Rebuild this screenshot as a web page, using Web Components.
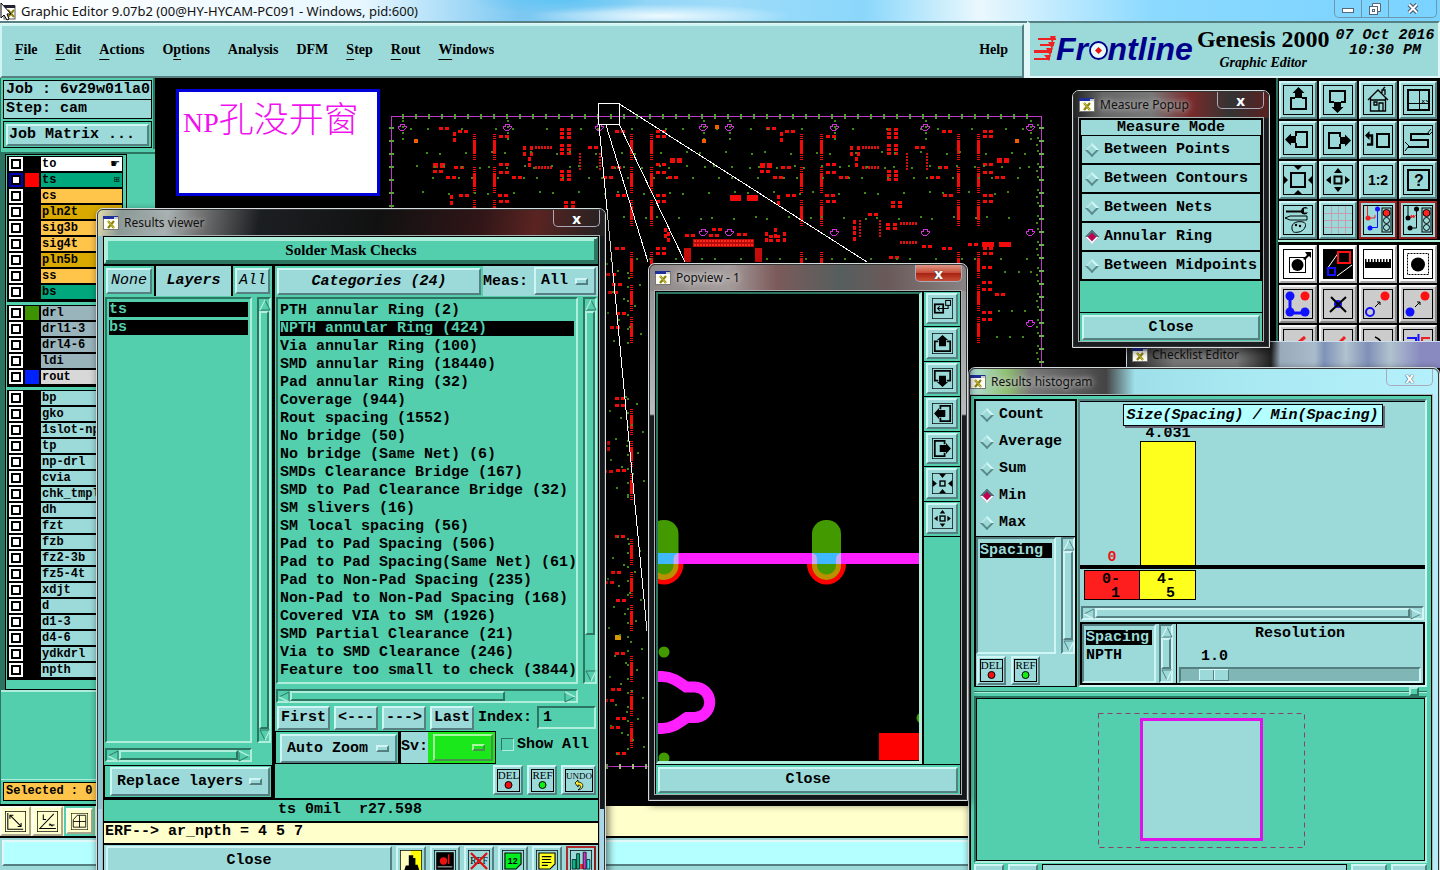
<!DOCTYPE html>
<html lang="en">
<head>
<meta charset="utf-8">
<title>Graphic Editor</title>
<style>
html,body{margin:0;height:100%;background:#000;overflow:hidden}
</style>
</head>
<body>
<ge-desktop></ge-desktop>
<script>
const MONO='"Liberation Mono","Noto Sans CJK SC",monospace';
const BASE=`
*{box-sizing:border-box}
:host{display:block;box-sizing:border-box}
:host,.cy{--face:#9cdada;--lt:#cff6f4;--dk:#557f80;--trough:#80b6b6}
.gr{--face:#54cfae;--lt:#aeeedb;--dk:#2c7561;--trough:#45ad91}
button,input,select{font:inherit;color:inherit;margin:0;padding:0;border:0;background:none;border-radius:0;outline:0;line-height:inherit}
button{text-align:center;white-space:nowrap}
.up{border:2px solid;border-color:var(--lt) var(--dk) var(--dk) var(--lt);background:var(--face)}
.in{border:2px solid;border-color:var(--dk) var(--lt) var(--lt) var(--dk);background:var(--face)}
svg{display:block}
ul{list-style:none;margin:0;padding:0}
`;
function define(name,css,html,setup){
  customElements.define(name,class extends HTMLElement{
    constructor(){super();this.attachShadow({mode:'open'});}
    connectedCallback(){
      const t=document.createElement('template');
      t.innerHTML='<style>'+BASE+css+'</style>'+(typeof html==='function'?html(this):html);
      this.shadowRoot.replaceChildren(t.content.cloneNode(true));
      if(setup)setup(this,this.shadowRoot);
    }
  });
}

/* ---------- icons ---------- */
const FRAME='<rect x=".5" y=".5" width="29" height="29" fill="none" stroke="#000"/>';
const ARROWBOX='<path d="M12 13H8V24H23V13H19" fill="none" stroke="#000" stroke-width="2"/><path d="M15.500 2l6 6h-2.500v5h-7V8H9.500z"/>';
const TRI4=(a,b)=>[0,90,180,270].map(r=>`<path transform="rotate(${r} 15 15)" d="M${11} ${a}h8l-4 ${b}z"/>`).join('');
const LIGHT='<rect x="19" y="3" width="9" height="24" fill="none" stroke="#000"/><circle cx="23.500" cy="8" r="3.500" fill="#f22" stroke="#000"/><circle cx="23.500" cy="15.500" r="3" fill="none" stroke="#000"/><circle cx="23.500" cy="22.500" r="3" fill="none" stroke="#000"/>';
const BOLDBOX='<path d="M9 12H4V26H26V12H21" fill="none" stroke="#000" stroke-width="2.500"/><path d="M15 3l8 7h-3v9H10v-9H7z"/>';
const ICONS={
 up:ARROWBOX,
 down:`<g transform="rotate(180 15 15)">${ARROWBOX}</g>`,
 left:`<g transform="rotate(-90 15 15)">${ARROWBOX}</g>`,
 right:`<g transform="rotate(90 15 15)">${ARROWBOX}</g>`,
 bup:BOLDBOX,
 bdown:`<g transform="rotate(180 15 15)">${BOLDBOX}</g>`,
 bleft:`<g transform="rotate(-90 15 15)">${BOLDBOX}</g>`,
 bright:`<g transform="rotate(90 15 15)">${BOLDBOX}</g>`,
 home:'<path d="M5 15L15 5l10 10M7.500 13v13h15V13M7 15h16M19 8V5h3v5M20 4l2-2M11 17h3v3h-3zM16 26v-8h4v8" fill="none" stroke="#000" stroke-width="1.300"/>',
 xy:'<rect x="5" y="5" width="21" height="20" fill="none" stroke="#000" stroke-width="2"/><path d="M16.500 5v20M5 18.500h21" stroke="#000"/><path d="M19 15l2.500 3M21.500 15l-2.500 3M23 15l1.500 2 1-2" fill="none" stroke="#000" stroke-width=".8"/>',
 undo:'<rect x="14" y="9" width="12" height="13" fill="none" stroke="#000" stroke-width="2"/><path d="M5 10.500h4v9H4" fill="none" stroke="#000" stroke-width="2.500"/><path d="M2 10.500L6.500 6v9z"/>',
 snake:'<path d="M26 9H8V15H25V22H5" fill="none" stroke="#000" stroke-width="2"/><path d="M24 9l4-5M26 10l3-3M6 21l-4-4M5 22l-3 4" fill="none" stroke="#000"/>',
 fit:'<rect x="8" y="8" width="14" height="14" fill="none" stroke="#000" stroke-width="2"/>'+TRI4(1,4),
 zin:'<rect x="11.500" y="11.500" width="7" height="7" fill="none" stroke="#000" stroke-width="2"/>'+[0,90,180,270].map(r=>`<path transform="rotate(${r} 15 15)" d="M11 8h8l-4-5z"/>`).join(''),
 zout:'<rect x="11.500" y="11.500" width="7" height="7" fill="none" stroke="#000" stroke-width="2"/>'+[0,90,180,270].map(r=>`<path transform="rotate(${r} 15 15)" d="M10 1h10l-5 6z"/>`).join(''),
 half:'<text x="15" y="20" text-anchor="middle" font-family="Liberation Sans,sans-serif" font-weight="700" font-size="14">1:2</text>',
 help:'<rect x="5" y="5" width="21" height="20" fill="none" stroke="#000" stroke-width="2"/><text x="16" y="21" text-anchor="middle" font-family="Liberation Sans,sans-serif" font-weight="700" font-size="16">?</text>',
 tools:'<path d="M3 5.500h15a4 4 0 0 1 7-2h-4v4h4a4 4 0 0 1-7 0H3z"/><path d="M2 13l5-2h17v4H7z" fill="none" stroke="#000"/><path d="M9 24c-1-7 6-8 11-7s2 9-4 10-6 0-7-3z" fill="none" stroke="#000"/><circle cx="13" cy="20" r="1.200"/><circle cx="17" cy="21" r="1.200"/>',
 grid:'<path d="M8.500 1v28M15.500 1v28M22.500 1v28M1 8.500h28M1 15.500h28M1 22.500h28" stroke="#c99cb0"/>',
 tl1:'<path d="M4.500 1v12H12v-3" fill="none" stroke="#e22"/><circle cx="5" cy="13" r="2.500" fill="#e22"/><path d="M14.500 4v18.500H7" fill="none" stroke="#11f"/><circle cx="14.500" cy="4" r="2.500" fill="#11f"/><circle cx="7" cy="23" r="2.500" fill="#11f"/>'+LIGHT,
 tl2:'<path d="M5 1v11M13.500 4v19H7" fill="none" stroke="#000"/><path d="M7 13l1.500-3v3l2-3v3l2-3" fill="none" stroke="#e22"/><circle cx="5" cy="13" r="2.500"/><circle cx="13.500" cy="4" r="2.500"/><circle cx="7" cy="23" r="2.500"/>'+LIGHT,
 dot:'<rect x="6.500" y="8.500" width="16" height="15" fill="none" stroke="#000"/><circle cx="14.500" cy="16" r="6"/><path d="M20 10l4-4-2-3h6v6l-2-2-4 4z"/>',
 poly:'<rect x="0" y="0" width="30" height="30" fill="#000"/><path d="M4 20L16 3M14 27l15-11" stroke="#fff"/><rect x="15" y="3" width="12" height="11" fill="none" stroke="#f11" stroke-width="2"/><rect x="5" y="19" width="7" height="7" fill="none" stroke="#11f" stroke-width="2"/>',
 ruler:'<path d="M2 10h1.500v3H5v-3h1.500v3H8v-3h1.500v3H11v-3h1.500v3H14v-3h1.500v3H17v-3h1.500v3H20v-3h1.500v3H23v-3h1.500v3H26v-3h2v9H2z"/>',
 pad:'<rect x="4.500" y="4.500" width="21" height="21" fill="none" stroke="#000" stroke-dasharray="2 1"/><circle cx="15" cy="15.500" r="7"/>',
 net:'<path d="M7 7v17h16" fill="none" stroke="#11f" stroke-width="3"/><circle cx="7" cy="7" r="4.500" fill="#11f"/><circle cx="7" cy="23" r="4.500" fill="#11f"/><circle cx="22" cy="23" r="4.500" fill="#11f"/><circle cx="22" cy="7" r="4.500" fill="#f11"/>',
 del:'<circle cx="15" cy="15" r="4" fill="#11f"/><path d="M8 8l15 15M23 8L7 23" stroke="#000" stroke-width="2"/>',
 mv1:'<circle cx="7" cy="23" r="4" fill="none" stroke="#11f" stroke-width="2"/><circle cx="22" cy="7" r="4.500" fill="#f11"/><path d="M12 18l5-5m-3 0h3v3" fill="none" stroke="#000"/>',
 mv2:'<circle cx="7" cy="23" r="4.500" fill="#11f"/><circle cx="22" cy="7" r="4.500" fill="#f11"/><path d="M12 18l5-5m-3 0h3v3" fill="none" stroke="#000"/>',
 ln1:'<path d="M8 20L22 8" stroke="#e22" stroke-width="3"/><path d="M6 24h17" stroke="#44d" stroke-width="3"/>',
 ln2:'<path d="M8 22L22 8" stroke="#e22" stroke-width="3"/><path d="M6 26L18 14" stroke="#44d" stroke-width="3"/>',
 arc:'<path d="M12 8q10 4 4 14" fill="none" stroke="#000" stroke-width="1.500"/>',
 mir:'<path d="M4 9h9v8H4M15.500 5v20" fill="none" stroke="#11f" stroke-width="2"/><path d="M27 9h-8v8h8" fill="none" stroke="#e22" stroke-width="2"/>',
 link:'<rect x="4" y="9" width="12" height="12" fill="none" stroke="#000" stroke-width="2.500"/><rect x="19.500" y="3.500" width="7" height="7" fill="none" stroke="#000" stroke-width="1.500"/><path d="M23 10v5H8m3-3l-3 3 3 3" fill="none" stroke="#000" stroke-width="1.500"/>',
 diag:'<path d="M4 3v23h22M7 6l16 16M7 11V6h5M23 17v5h-5" fill="none" stroke="#000" stroke-width="1.500"/>',
 angle:'<path d="M3 25h24M4 25L24 4M9 5v7h4M17 20h8M18 18l4 4" fill="none" stroke="#000" stroke-width="1.500"/>',
 quad:'<path d="M4 25V12l7-8h15v21zM4 15h22M15 4v21" fill="none" stroke="#000" stroke-width="1.500"/>',
 day:'<rect width="15" height="30" fill="#ffffc0"/><rect x="15" width="15" height="30" fill="#ff0"/><path d="M12 11V7h6v4l3 0v9h3l3 10H5l3-9h4z"/>',
 lamp:'<rect x="3" y="3" width="24" height="24"/><circle cx="13" cy="15" r="5" fill="#e11"/><path d="M20 6v13" stroke="#e11" stroke-width="2"/><path d="M5 23h20" stroke="#fff"/>',
 noref:'<text x="15" y="19" text-anchor="middle" font-family="Liberation Serif,serif" font-weight="400" font-size="13">REF</text><path d="M4 4l22 22M26 4L4 26" stroke="#d11" stroke-width="3"/>',
 twelve:'<path d="M4 4h22v15l-7 7H4z" fill="#0e2" stroke="#000" stroke-width="1.500"/><text x="14.500" y="19" text-anchor="middle" font-family="Liberation Sans,sans-serif" font-weight="700" font-size="12">12</text>',
 note:'<path d="M4 4h22v15l-7 7H4z" fill="#ff2" stroke="#000" stroke-width="1.500"/><path d="M8 9h13M8 13h12M8 17h13M8 21h8" stroke="#000" stroke-width="1.500"/>',
 bars:'<path d="M3 26V13h5v13zM9 26V5h4v21z" fill="#0b8" stroke="#000"/><path d="M14 26v-7h4v7z" fill="#e22"/><path d="M18 26V3h4v23z" fill="#c3c" stroke="#000"/><path d="M23 26V13h4v13z" fill="#3ef" stroke="#000"/>',
};
const svg=(n,s)=>`<svg width="${s}" height="${s}" viewBox="0 0 30 30" aria-hidden="true">${ICONS[n]||''}${FRAME}</svg>`;
const XLOGO='<svg width="16" height="14" viewBox="0 0 16 14" aria-hidden="true"><rect x=".5" y=".5" width="15" height="13" fill="#fffff4" stroke="#777"/><rect x="0" y="0" width="15" height="3" fill="#20309a"/><rect x="11" y="1" width="4" height="2" fill="#ccc"/><path d="M5 5l6 7M11 5l-6 7" stroke="#8c8210" stroke-width="2.200"/><path d="M5 5l6 7" stroke="#d8cf3c"/></svg>';

/* ---------- controls ---------- */
define('mo-button',`
:host{font:700 15px/18px ${MONO};color:#000}
button{display:flex;align-items:center;justify-content:center;width:100%;height:100%}
`,'<button type="button" class="up" part="b"><slot></slot></button>');

define('icon-button',`
button{display:grid;place-items:center;width:100%;height:100%;border-width:3px}
:host([tone=grey]){--face:#cccccc;--lt:#f4f4f4;--dk:#888}
:host([tone=white]){--face:#fff;--lt:#fff;--dk:#aaa}
:host([tone=red]){--lt:#b02828;--dk:#901c1c}
:host([tone=cream]){--face:#ffffcc;--lt:#fffff0;--dk:#aaa890}
`,h=>`<button type="button" class="up" aria-label="${h.getAttribute('icon')}">${svg(h.getAttribute('icon'),+h.getAttribute('size')||30)}</button>`);

define('tag-button',`
button{display:grid;place-items:center;width:100%;height:100%;border-width:3px}
`,h=>{const t=h.getAttribute('text');const w=t.length>3?28:23;
 return `<button type="button" class="up"><svg width="${w}" height="23" viewBox="0 0 ${w} 23"><rect x=".5" y=".5" width="${w-1}" height="22" fill="none" stroke="#000"/><text x="${w/2}" y="10" text-anchor="middle" font-family="Liberation Serif,serif" font-weight="400" font-size="${t.length>3?9:11}">${t}</text>${t==='UNDO'?'<path d="M10 14l3-3v2c6 0 7 7 0 8 4-3 3-5 0-5v2z" fill="#fe3" stroke="#000" stroke-width=".8"/>':`<circle cx="${w/2}" cy="16" r="3.500" fill="${h.getAttribute('color')}" stroke="#000"/>`}</svg></button>`});

define('mo-option',`
:host{font:700 15px/18px ${MONO};color:#000}
label{display:grid;grid-template-columns:1fr auto;align-items:center;height:100%;padding-right:6px}
select{appearance:none;grid-area:1/1/2/3;padding-left:5px;height:100%;width:100%}
i{grid-area:1/2;width:13px;height:7px;pointer-events:none}
`,h=>`<label class="up"><select aria-label="${h.getAttribute('label')}"><option>${h.getAttribute('value')}</option></select><i class="up"></i></label>`);

define('mo-scroll',`
:host{--face:inherit;--lt:inherit;--dk:inherit;--trough:inherit}
div{display:flex;width:100%;height:100%;background:var(--trough);border-width:1px}
:host([dir=v]) div{flex-direction:column}
span{flex:none}
.t{border-width:2px}
`,h=>{const v=h.getAttribute('dir')==='v',s=+h.getAttribute('size')||100;
 const a=r=>`<svg width="12" height="12" viewBox="0 0 12 12"><g transform="rotate(${r} 6 6)"><path d="M6 1L11 11H1z" fill="var(--face)" stroke="var(--dk)"/><path d="M1 11L6 1" stroke="var(--lt)" stroke-width="1.500"/></g></svg>`;
 return `<div class="in">${a(v?0:-90)}<span class="up t" style="flex:${s} 1 0"></span>${s<100?`<span style="flex:${100-s} 1 0"></span>`:''}${a(v?180:90)}</div>`});

define('mo-radios',`
:host{font:700 15px/18px ${MONO};color:#000}
fieldset{border:0;margin:0;padding:0;min-width:0}
label{display:flex;align-items:center;gap:7px;padding-left:6px;height:var(--row,27px);background:var(--face);white-space:pre}
:host([ruled]) label{border-bottom:2px solid #000;padding-left:5px}
input{appearance:none;width:10px;height:10px;flex:none;transform:rotate(45deg);border:2px solid;border-color:#d4f8f6 #5b8989 #5b8989 #b9e6e4;background:#9cdada}
input:checked{background:#c1004f;border-color:#44777a #e8ffff #e8ffff #44777a}
`,h=>`<fieldset>${h.getAttribute('items').split('|').map(t=>`<label><input type="radio" name="r" ${t===h.getAttribute('value')?'checked':''}>${t}</label>`).join('')}</fieldset>`);

/* ---------- glass window frame ---------- */
define('mo-window',`
:host{position:absolute;display:flex;flex-direction:column;padding:0 6px 6px;border:1px solid #d5dcde;outline:1px solid #333;outline-offset:-2px;border-radius:7px 7px 0 0;background:var(--side,#202428);box-shadow:2px 3px 8px #0009;overflow:hidden}
header{display:flex;align-items:center;gap:5px;height:27px;margin:0 -6px;padding:0 5px 0 6px;background:var(--glass);font:400 12px/16px "Noto Sans","Open Sans",sans-serif;color:#111;flex:none}
h2{font:inherit;margin:0;padding:0 8px 0 0;text-shadow:0 0 5px var(--glow,#aaa),0 0 8px var(--glow,#aaa);flex:1;white-space:nowrap}
.x{align-self:flex-start;width:47px;height:18px;border:1px solid #aab;border-top:0;border-radius:0 0 5px 5px;color:#fff;font-weight:700;font-size:15px;line-height:14px;text-shadow:0 0 1px #345,0 0 1px #345}
:host([hot]) .x{background:linear-gradient(#e3a092,#c8503a 50%,#a41d10 50%,#c84f33)}
.body{border:1px solid #000;outline:1px solid #a8b4b4;background:#000;flex:1;display:flex;flex-direction:column;min-height:0}
`,h=>`<header>${XLOGO}<h2>${h.getAttribute('caption')}</h2><button class="x" aria-label="Close window">x</button></header><div class="body"><slot></slot></div>`);

/* ---------- top bar ---------- */
define('ge-titlebar',`
:host{height:21px;background:radial-gradient(ellipse 90px 14px at 560px 0,#5fc4f4,transparent),radial-gradient(ellipse 130px 12px at 660px 16px,#eefaff,transparent),linear-gradient(90deg,#fff 0,#e8f7ff 25%,#7cc8f2 36%,#9fdcf9 50%,#8ad7fb 60%,#eaf8fd 68%,#8bd9ff 80%,#79d3ff)}
div{display:flex;align-items:center;height:100%}
h1{font:400 13px/20px "Noto Sans","Open Sans",sans-serif;margin:0 0 0 5px;flex:1;color:#111;white-space:nowrap}
span{display:flex;align-self:flex-start;margin-right:3px;border:1px solid #6f97aa;border-top:0;border-radius:0 0 5px 5px}
button{width:27px;height:17px;display:grid;place-items:center;border-right:1px solid #6f97aa}
button:last-child{width:47px;border:0}
`,`<div>
<svg width="16" height="20" viewBox="0 0 16 20"><rect x="4" y="5" width="11" height="13" fill="#fffff4" stroke="#555"/><rect x="4" y="4" width="11" height="3" fill="#223"/><path d="M8 9l6 7M14 9l-6 7" stroke="#8c8210" stroke-width="2"/><path d="M1 2v15l3-3 3 5 2-1-2-5h4z" fill="#fff" stroke="#000"/></svg>
<h1>Graphic Editor 9.07b2 (00@HY-HYCAM-PC091 - Windows, pid:600)</h1>
<span><button aria-label="Minimize"><svg width="13" height="12"><rect x=".5" y="5.500" width="11" height="4" fill="#fff" stroke="#567"/></svg></button><button aria-label="Restore"><svg width="12" height="12"><path d="M3.500 3V.5h8v8H9" fill="#fff" stroke="#567"/><rect x=".5" y="3.500" width="8" height="8" fill="#fff" stroke="#567"/><rect x="3.500" y="6.500" width="2" height="2" fill="none" stroke="#567"/></svg></button><button aria-label="Close"><svg width="12" height="11"><path d="M2 1.500l8 8M10 1.500l-8 8" stroke="#456" stroke-width="4"/><path d="M2 1.500l8 8M10 1.500l-8 8" stroke="#fff" stroke-width="2"/></svg></button></span></div>`);

define('ge-menubar',`
:host{height:57px;font:700 14px/20px "Liberation Serif",serif;color:#000;padding-top:1px;background:#e2f8f8;border-top:2px solid #557f80}
nav{display:flex;align-items:center;height:100%;gap:18px;padding:0 14px 2px 13px;border-right-width:3px;border-bottom-width:3px;margin-right:3px}
u{text-underline-offset:5px;text-decoration-thickness:1px;text-decoration-skip-ink:none}
.sp{flex:1}
`,`<nav class="up"><button><u>F</u>ile</button><button><u>E</u>dit</button><button><u>A</u>ctions</button><button>O<u>p</u>tions</button><button>Analysis</button><button>DFM</button><button><u>S</u>tep</button><button><u>R</u>out</button><button><u>W</u>indows</button><span class="sp"></span><button>Help</button></nav>`);

define('ge-brand',`
:host{height:57px;background:#9cdada;border:2px solid;border-color:#557f80 #e2f8f8 #e2f8f8 #e2f8f8;border-left-width:3px;color:#000}
.row{display:flex;align-items:flex-start;gap:4px;padding-left:4px}
.logo{display:flex;align-items:flex-start;height:50px;padding-top:8px;font:italic 700 32px/36px "Liberation Sans",sans-serif;color:#00008c}
.logo b{position:relative;color:transparent;font-weight:700}
.logo b svg{position:absolute;left:1px;top:10px}
.mid{display:flex;flex-direction:column;align-items:center;font:700 24px/28px "Liberation Serif",serif;padding-top:2px;white-space:nowrap}
.mid em{font:italic 700 14px/20px "Liberation Serif",serif}
time{font:italic 700 15px/15px "Liberation Mono",monospace;text-align:center;padding-top:5px;white-space:pre;flex:none;margin-left:2px}
`,`<div class="row"><div class="logo"><svg width="22" height="26" viewBox="0 0 22 26" style="margin-top:5px"><path d="M4 2h18v2H4zM6 8h14v2H6zM0 14h18v3H0zM0 22h16v2H0z" fill="#e22"/><path d="M16 0h6l-4 7zM14 6h7l-3 7zM12 12h7l-3 8zM10 19h7l-2 6z" fill="#e22"/></svg><span>Fr<b>o<svg width="19" height="19" viewBox="0 0 19 19"><circle cx="9.500" cy="9.500" r="8.500" fill="#e8fbfb" stroke="#00008c" stroke-width="1.800"/><path d="M9.500 6l3.500 3.500-3.500 3.500-3.500-3.500z" fill="#e11"/></svg></b>ntline</span></div>
<div class="mid">Genesis 2000<em>Graphic Editor</em></div><time>07 Oct 2016
10:30 PM</time></div>`);

/* ---------- layer sidebar ---------- */
const LAYERS=[
 [['to','#fff','','☛'],['ts','#00a67c','#f00','⊞'],['cs','#ffc54a'],['pln2t','#d9a900'],['sig3b','#ffc54a'],['sig4t','#ffc54a'],['pln5b','#d9a900'],['ss','#ffc54a'],['bs','#00a67c']],
 [['drl','#9ab4bc','#3e9400'],['drl1-3','#9ab4bc'],['drl4-6','#9ab4bc'],['ldi','#9ab4bc'],['rout','#d8d8d8','#0022ff']],
 ['bp','gko','1slot-np','tp','np-drl','cvia','chk_tmpl','dh','fzt','fzb','fz2-3b','fz5-4t','xdjt','d','d1-3','d4-6','ydkdrl','npth'].map(n=>[n,'#9cdada'])];
define('ge-layers',`
:host{background:#54cfae;font:700 15px/18px ${MONO};color:#000;display:flex;flex-direction:column;border-left:1px solid #2c7561}
.job{padding:2px 1px 1px 2px;border-right:2px solid #2c7561}
.job p{margin:0;border:1px solid #000;background:#9cdada;height:20px;padding-left:2px;white-space:pre;overflow:hidden}
.job p+p{border-top:0;height:19px;line-height:18px}
.mx{border:1px solid #000;margin-top:2px;padding:2px;height:27px}
.mx mo-button{height:22px}
.mx mo-button::part(b){justify-content:flex-start;padding-left:1px}
.list{margin-top:3px;border-top:2px solid #2c7561;border-left:4px solid #2c7561}
.in2{border:1px solid #000;width:122px;padding:1px 3px 9px 1px}
ul{background:#000;padding:1px 1px 1px 2px;margin-bottom:3px}
ul:last-child{margin:0}
li{height:16px;display:flex;gap:2px;padding-bottom:2px}
ul li label{display:flex;gap:2px;width:100%}
input{appearance:none;width:14px;height:14px;background:#fff;border:2px solid #fff;outline:2px solid #000;outline-offset:-4px;flex:none}
li.on input{background:#fff;border-color:#0000b8}
s{width:14px;flex:none}
span{flex:1;font-size:12px;line-height:14px;padding-left:1px;display:flex;justify-content:space-between;padding-right:2px;white-space:nowrap;overflow:hidden}
.fill{flex:1;border-top:2px solid #aeeedb;border-bottom:1px solid #aeeedb}
.sel{margin:2px 0 3px 2px;height:19px;border:1px solid #000;background:#ffc54a;font-size:12px;line-height:17px;padding-left:2px;white-space:pre}
`,()=>`<div class="job"><p>Job : 6v29w01la0</p><p>Step: cam</p><div class="mx"><mo-button>Job Matrix ...</mo-button></div></div>
<div class="list"><div class="in2">${LAYERS.map(g=>`<ul>${g.map(([n,c,s,m])=>`<li class="${n==='ts'?'on':''}"><label><input type="checkbox"><s style="background:${s||'#000'}"></s><span style="background:${c}">${n}${m?`<i style="font:${m==='☛'?11:8}px/14px 'DejaVu Sans',sans-serif">${m}</i>`:''}</span></label></li>`).join('')}</ul>`).join('')}</div></div>
<div class="fill"></div><div class="sel">Selected : 0</div>`);

/* ---------- toolbar ---------- */
const TOOLS=[['up','down','home','xy','left','right','undo','snake','fit','zin','half','help','tools','grid','!tl1','!tl2'],['*dot','*poly','*ruler','*pad','net','del','mv1','mv2','ln1','ln2','arc','mir']];
define('ge-tools',`
:host{background:#000;border-left:2px solid #2c7561}
div{display:grid;grid-template-columns:repeat(4,38px);gap:2px;padding:3px 1px 1px 1px}
div+div{border-top:2px solid #aeeedb;padding-top:3px}
icon-button{height:38px}
`,()=>TOOLS.map((g,i)=>`<div>${g.map(n=>{const f=n[0];return `<icon-button icon="${n.replace(/[!*]/,'')}" tone="${f==='!'?'red':f==='*'?'white':i?'grey':''}"></icon-button>`}).join('')}</div>`).join(''));

/* ---------- board drawing ---------- */
function boardSvg(){
 let o='';
 const R=(x,y,w,h,c='#f10b0b')=>{o+=`<rect x="${x}" y="${y}" width="${w}" height="${h}" fill="${c}"/>`};
 const G=(x,y)=>R(x,y,2,2,'#3e8a12');
 const pair=(x,y,b)=>{const w=b?5:4,h=b?5:3;R(x-w-1,y-h/2|0,w,h);R(x+1,y-h/2|0,w,h)};
 const vpair=(x,y)=>{R(x-1,y,3,4);R(x-1,y+6,3,4)};
 const hchip=(x,y)=>{o+=`<path d="M${x-9} ${y}h18" stroke="#e01010" stroke-width="3" stroke-dasharray="2 1"/>`};
 const vchip=(x,y,h)=>{o+=`<path d="M${x} ${y}v${h}" stroke="#d01010" stroke-width="2" stroke-dasharray="2 1"/>`};
 const strip=(x,y)=>{R(x-1,y+6,3,14);for(const d of[0,2,4,21,23,25])R(x-1,y+d,3,1)};
 const quad=(x,y,n)=>{for(let i=0;i<n;i++){R(x-6,y+i*4,4,3);R(x+1,y+i*4,4,3)}};
 for(let m=0;m<2;m++){const d=327*m;
  for(const x of[474,494,631,651])for(const y of[134,167,200,252,285,317])strip(x+d,y);
  for(const[x,y,b]of[[444,129],[463,132],[504,137],[439,166,1],[438,172],[459,168],[451,178],[504,165],[504,173],[517,178],[464,196],[503,196],[504,202],[593,148],[620,132],[661,132],[661,137],[676,161,1],[616,168],[608,178],[661,165],[661,173],[673,178],[621,196],[661,196],[661,202],[620,249],[661,249],[661,254],[660,268],[660,283],[660,290],[673,295],[660,313],[660,320]])pair(x+d,y,b);
  vpair(454+d,132);vpair(451+d,195);vpair(524+d,146);vpair(531+d,146);vpair(529+d,157);
  hchip(544+d,147);hchip(544+d,167);vchip(580+d,153,18);vchip(600+d,153,18);
  quad(566+d,128,3);quad(566+d,144,3);quad(566+d,170,3);quad(570+d,201,2);
 }
 R(730,195,11,6);R(747,195,11,6);
 R(693,239,61,8,'#b80c0c');o+='<path d="M694 241h59M694 245h59" stroke="#ff2a18" stroke-width="2" stroke-dasharray="2 1"/>';
 R(684,248,7,14,'#c80c0c');R(755,248,7,14,'#c80c0c');
 vchip(860,220,18);vchip(880,220,18);pair(873,215);vpair(854,220);vpair(854,231);quad(892,223,2);hchip(909,223);hchip(909,242);
 for(const[x,y]of[[988,245],[1005,245]])R(x-6,y-3,12,5);pair(973,245);pair(927,247);pair(717,230);pair(714,236);pair(690,236);pair(742,235);vpair(668,232);vpair(665,228);vpair(766,232);vpair(775,228);vpair(784,232);quad(775,235,2);pair(894,258);
 for(const y of[409,441,474,539,572,605,656,690,722])strip(631,y);
 for(const[x,y]of[[611,275],[617,285],[613,293],[621,314],[615,328],[620,399],[620,406],[608,472],[621,471],[620,537],[616,573],[609,583],[621,601],[620,654],[616,690],[609,701],[621,719],[615,728],[621,754]])pair(x,y);
 vpair(608,441);R(615,635,6,5,'#d89a00');
 /* vias */
 for(let x=402;x<1035;x+=13){R(x,114,2,5,'#4fa030')}
 for(let x=606;x<648;x+=13){R(x,764,2,5,'#9fc080')}
 for(let y=127,i=0;y<366;y+=13,i++){R(389,y,5,2,'#5fa040');R(1039,y,5,2,'#6fb050');G(1037,y-3);if(i%2)G(1036,y+4)}
 const rows=[[129,17],[152,13],[166,9],[178,13],[192,13],[217,11],[259,13]];
 rows.forEach(([y,s],r)=>{for(let x=410+r*3,i=0;x<1030;x+=s,i++){if((i*7+r*3)%5<3)G(x,y+(i*r%3)-1)}});
 for(const[x,y]of[[1004,271],[1018,271],[1030,271],[998,310],[1011,310],[1024,310],[996,336],[1009,336],[1022,336]])G(x,y);
 for(const x of[402,507,703,729,834,925,1030])for(let y=120;y<140;y+=6)G(x,y);
 for(let y=263,i=0;y<760;y+=7,i++){if(y>345&&y<396||y>500&&y<532)continue;G(606+(i*11)%38,y);if(i%2)G(610+(i*17)%34,y+2)}
 /* fiducials */
 for(const[x,y]of[[402,127],[507,127],[599,127],[703,127],[729,127],[834,127],[925,127],[1030,127],[703,232],[729,232],[834,232],[925,232],[1030,232],[1030,323]])o+=`<path d="M${x-4} ${y-1}h2v-2h4v2h2v2l-2 2h-4l-2-2z" fill="none" stroke="#d030d8"/>`;
 for(const[x,y]of[[415,141],[716,127],[703,141],[1016,141]])R(x-1,y-2,4,4,'#f06000');
 return o;
}
define('board-view',`
:host{background:#000;overflow:hidden;position:relative;min-width:0}
.note{position:absolute;left:21px;top:11px;width:204px;height:107px;background:#fff;border:3px solid #0000d8;color:#f010f0;font:300 35px/46px "Noto Sans CJK SC",sans-serif;padding:2px 0 0 4px;white-space:nowrap}
.note span{font:400 28px/46px "Liberation Serif",serif}
`,()=>`<svg width="1121" height="728" viewBox="155 78 1121 728" shape-rendering="crispEdges"><path d="M391.500 367V116.500H1041.500V367M391.500 367V766.500H1041.500V367" fill="none" stroke="#c238c8"/>${boardSvg()}<rect x="598.500" y="103.500" width="21" height="21" fill="none" stroke="#fff"/><path d="M619.500 104L867 262M619.500 125L685 262M606 125l42 137M599 125l48 506" fill="none" stroke="#fff"/></svg><div class="note"><span>NP</span>孔没开窗</div>`);

/* ---------- results viewer ---------- */
const CATS=['PTH annular Ring (2)','NPTH annular Ring (424)','Via annular Ring (100)','SMD annular Ring (18440)','Pad annular Ring (32)','Coverage (944)','Rout spacing (1552)','No bridge (50)','No bridge (Same Net) (6)','SMDs Clearance Bridge (167)','SMD to Pad Clearance Bridge (32)','SM slivers (16)','SM local spacing (56)','Pad to Pad Spacing (506)','Pad to Pad Spacing(Same Net) (61)','Pad to Non-Pad Spacing (235)','Non-Pad to Non-Pad Spacing (168)','Covered VIA to SM (1926)','SMD Partial Clearance (21)','Via to SMD Clearance (246)','Feature too small to check (3844)'];
define('results-panel',`
:host{font:700 15px/18px ${MONO};color:#000;background:#000}
h3{margin:0;font:700 15px/22px "Liberation Serif",serif;text-align:center;height:27px;border-width:3px;border-color:#9cdada;box-shadow:inset -2px -2px #2c7561,inset 2px 2px #aeeedb}
.cols{display:grid;grid-template-columns:168px 1fr;gap:3px;margin-top:2px}
.l,.r{background:#54cfae;min-width:0}
.hd{display:flex;height:30px;background:#54cfae}
.l .hd{gap:2px;background:#000}
.l .hd div{background:#54cfae;padding:2px}
.l .hd mo-button{height:26px}
.n{font-weight:400;font-style:italic}
.l .hd b{flex:1;background:#9cdada;text-align:center;line-height:30px;font-style:italic}
li{height:18px;line-height:16px;border:solid var(--face);border-width:1px 0 2px;white-space:pre}
li.s{background:#000;color:#54cfae}
.box{display:grid;grid-template-columns:minmax(0,1fr) 14px;gap:5px 5px;padding:1px}
.rep{border:1px solid #000;margin-top:2px;padding:1px 1px 1px 5px;height:33px}
.rep mo-option{height:29px}
.r .hd{background:#9cdada}
.cat{flex:none;width:208px;padding:2px;background:#54cfae}
.cat mo-button{height:27px;font-style:italic}
.hd label{padding:7px 0 0 0;white-space:pre}
.hd mo-option{width:62px;margin:1px 2px 1px auto}
.nav{display:flex;gap:4px;padding:2px 2px;height:27px;align-items:center}
.nav mo-button{height:24px;width:44px}.nav mo-button:first-child{width:53px}
.nav label{display:flex;gap:5px;align-items:center;flex:1}
.nav input{flex:1;width:20px;height:23px;padding-left:4px}
.opt{display:flex;height:33px}
.opt .a{width:124px;border:1px solid #000;padding:2px 1px 1px 4px}
.opt .a mo-option{height:29px}
.opt .b{border:1px solid #000;border-left:2px solid #000;display:flex;background:#9cdada;width:97px;line-height:30px}
.opt .b span{width:27px}
.opt .b i{flex:1;background:#1ae81a;padding:2px 2px 2px 5px}
.opt .b mo-option{--face:#1ae81a;--lt:#a8f8a0;--dk:#4a8f50;height:27px;font-style:normal}
.opt label{display:flex;gap:3px;padding:3px 0 0 5px;height:24px;align-items:center}
.opt input{appearance:none;width:13px;height:13px;border-width:1px}
.tags{display:flex;justify-content:flex-end;gap:4px;padding:1px 2px;height:33px}
.tags tag-button{width:30px;height:30px}.tags tag-button:last-child{width:35px}
.info{height:23px;background:#54cfae;border:solid #000;border-width:0 0 2px;margin-top:2px;text-align:left;padding:1px 0 0 174px;white-space:pre}
.erf{height:20px;background:#ffffcc;padding:0 0 0 1px;line-height:18px;white-space:pre;margin-bottom:2px}
.ft{display:flex;gap:4px;background:#9cdada;padding:1px 2px}
.ft mo-button{flex:1;height:30px}
.ft icon-button{width:30px;height:30px}
`,()=>`<h3 class="gr up">Solder Mask Checks</h3>
<div class="cols"><section class="l gr"><div class="hd"><div style="width:50px"><mo-button class="n">None</mo-button></div><b>Layers</b><div style="width:39px"><mo-button class="n">All</mo-button></div></div>
<div class="box" style="grid-template-rows:446px 14px"><ul class="list in" style="padding:2px 2px"><li class="s">ts</li><li class="s">bs</li></ul><mo-scroll dir="v"></mo-scroll><mo-scroll dir="h"></mo-scroll></div>
<div class="rep"><mo-option label="Layer mode" value="Replace layers"></mo-option></div></section>
<section class="r gr"><div class="hd"><div class="cat"><mo-button>Categories (24)</mo-button></div><label>Meas:</label><mo-option label="Meas" value="All"></mo-option></div>
<div class="box" style="grid-template-rows:387px 14px"><ul class="list in" style="padding:3px 2px">${CATS.map((c,i)=>`<li class="${i===1?'s':''}">${c}</li>`).join('')}</ul><mo-scroll dir="v" size="90"></mo-scroll><mo-scroll dir="h" size="78"></mo-scroll></div>
<div class="nav"><mo-button>First</mo-button><mo-button>&lt;---</mo-button><mo-button>---&gt;</mo-button><mo-button>Last</mo-button><label>Index:<input class="in" type="text" value="1"></label></div>
<div class="opt"><div class="a"><mo-option label="Zoom" value="Auto Zoom"></mo-option></div><div class="b"><span>Sv:</span><i><mo-option label="Severity" value=""></mo-option></i></div><label><input class="in" type="checkbox">Show All</label></div>
<div class="tags"><tag-button text="DEL" color="#e11"></tag-button><tag-button text="REF" color="#1e1"></tag-button><tag-button text="UNDO"></tag-button></div></section></div>
<div class="info">ts 0mil  r27.598</div><div class="erf">ERF--&gt; ar_npth = 4 5 7</div>
<div class="ft"><mo-button>Close</mo-button><icon-button icon="day" size="22"></icon-button><icon-button icon="lamp" size="22"></icon-button><icon-button icon="noref" size="22"></icon-button><icon-button icon="twelve" size="22"></icon-button><icon-button icon="note" size="22"></icon-button><icon-button icon="bars" size="22" tone="red"></icon-button></div>`);

/* ---------- popview ---------- */
define('pop-panel',`
:host{background:#000;font:700 15px/18px ${MONO};flex:1;display:flex;flex-direction:column}
.m{display:grid;grid-template-columns:1fr 36px;gap:2px;flex:1;min-height:0}
.v{border-width:2px 3px 3px 2px;background:#000;overflow:hidden}
.t{background:#54cfae}
.t div{padding:1px 2px 2px;border-bottom:1px solid #000;height:35px}
.t icon-button{height:31px;width:32px}
.c{background:#54cfae;padding:2px;margin-top:1px}
.c mo-button{height:26px}
`,()=>`<div class="m"><div class="v in gr" style="background:#000"><svg width="262" height="467" viewBox="658 295 262 467">
<g fill="#429a00"><rect x="649.500" y="521" width="29" height="60" rx="14"/><rect x="812" y="521" width="29" height="60" rx="14"/></g>
${[664,826.5].map(x=>`<path d="M${x-19.5} 565a19.500 20.500 0 0 0 39 0z" fill="#f00"/><path d="M${x-14.5} 560v6a14.500 15 0 0 0 29 0v-6z" fill="#b89000"/><path d="M${x-9.5} 560v6a9.500 9.500 0 0 0 19 0v-6z" fill="#429a00"/>`).join('')}
<rect x="658" y="554" width="262" height="11" fill="#ff20ff"/>
${[664,826.5].map(x=>`<rect x="${x-14.5}" y="554" width="29" height="11" fill="#c8a8f0"/><path d="M${x-14.5} 554h29q-5 1-5 6v5h-19v-5q0-5-5-6z" fill="#40b8ff"/>`).join('')}
<g fill="#429a00"><circle cx="664" cy="653" r="5.500"/><circle cx="664" cy="759" r="5.500"/><circle cx="922" cy="719" r="5.500"/></g>
<path d="M650 677.500h12C672 677.500 679 683 686 688H694.500a15.200 15.200 0 0 1 0 30.500H687C680 723 673 729.500 662 729.500H650" fill="none" stroke="#ff20ff" stroke-width="11"/>
<rect x="879" y="734" width="41" height="27" fill="#f00"/></svg></div>
<div class="t">${['link','bup','bdown','bleft','bright','zout','zin'].map(n=>`<div><icon-button icon="${n}" size="21"></icon-button></div>`).join('')}</div></div><div class="c"><mo-button>Close</mo-button></div>`);

define('measure-panel',`
:host{font:700 15px/18px ${MONO};color:#000;background:#54cfae}
h3{font:inherit;line-height:15px;height:17px;margin:0;text-align:center;background:#9cdada;border:1px solid #000}
mo-radios{--row:29px;border-left:2px solid #000;border-right:2px solid #000}
.g{height:32px;border-bottom:1px solid #000}
.c{padding:2px}
mo-button{height:25px}
`,`<h3>Measure Mode</h3><mo-radios ruled items="Between Points|Between Contours|Between Nets|Annular Ring|Between Midpoints" value="Annular Ring"></mo-radios><div class="g"></div><div class="c"><mo-button>Close</mo-button></div>`);

/* ---------- histogram ---------- */
define('hist-panel',`
:host{font:700 15px/18px ${MONO};color:#000;background:#54cfae;flex:1;padding:3px 4px 0 3px}
.top{display:grid;grid-template-columns:103px 1fr;gap:1px}
.l{border:2px solid #000;border-bottom-width:1px;background:#9cdada}
.l mo-radios{border-bottom:1px solid #000}
.lst{display:grid;grid-template-columns:1fr 14px;gap:5px;height:117px}
ul{padding:3px 2px}
li{height:18px;line-height:15px;border:solid var(--face);border-width:1px 0 2px;white-space:pre}
.s{background:#000;color:#9cdada}
.b{display:flex;gap:5px;padding:2px 1px 1px}
.b tag-button{width:29px;height:29px}
.r{background:#9cdada;display:flex;flex-direction:column;border-width:2px}
.r>*{flex:none}
.ch{height:168px;position:relative;display:flex;align-items:flex-end;border-bottom:4px solid #000;padding-left:4px;border-top:1px solid #000}
.ti{position:absolute;left:50%;transform:translateX(-50%);top:2px;background:#b4ffff;border:1px solid #000;box-shadow:2px 2px #667;font-style:italic;line-height:17px;padding:2px 3px 0;height:22px;white-space:nowrap}
.col{width:56px;display:flex;flex-direction:column;align-items:center;line-height:14px}
.col i{width:56px;background:#ffff1e;border:1px solid #000;border-bottom:0;height:124px;flex:none}
.lab{display:flex;padding:1px 0 6px 4px}
.lab pre{margin:0;width:56px;height:30px;border:1px solid #000;font:inherit;line-height:14px;padding:2px 0 0 17px}
.lab pre+pre{border-left:0}
.r>mo-scroll{height:14px;margin:0 1px}
.bt{display:grid;grid-template-columns:74px 14px 1fr;gap:3px;height:63px;border:2px solid #000;margin-top:2px}
.res{border-left:1px solid #000;padding:0 2px;display:flex;flex-direction:column}
.res label{display:flex;flex-direction:column;height:100%}
.res span{text-align:center;line-height:19px}
.res output{padding:5px 0 0 22px;line-height:17px}
.res input{appearance:none;width:100%;height:16px;background:#80b6b6;padding-left:18px;padding-right:190px;margin-top:auto}
.res input::-webkit-slider-thumb{appearance:none;width:30px;height:12px;border:1px solid;border-color:#d4f8f6 #557f80 #557f80 #d4f8f6;background:linear-gradient(90deg,#9cdada 13px,#557f80 13px 14px,#d4f8f6 14px 15px,#9cdada 15px)}
.sash{height:9px;display:flex;justify-content:flex-end;padding-right:8px;background:linear-gradient(#54cfae 4px,#2c7561 4px 5px,#aeeedb 5px 6px,#54cfae 6px)}
.sash i{width:10px;height:9px}
.dr{height:167px;border-width:2px;box-shadow:inset 0 0 0 1px #000;display:grid;place-items:center}
.ft{display:grid;grid-template-columns:30px 30px 1fr 36px 36px;gap:4px;height:20px;padding-top:1px}
.ft div:nth-child(3){background:#9cdada;border:1px solid #000}
`,()=>`<div class="top"><div class="l cy"><mo-radios items="Count|Average|Sum|Min|Max" value="Min"></mo-radios><div class="lst"><ul class="in"><li class="s">Spacing</li></ul><mo-scroll dir="v"></mo-scroll></div><div class="b"><tag-button text="DEL" color="#e11"></tag-button><tag-button text="REF" color="#1e1"></tag-button></div></div>
<div class="r in"><div class="ch"><div class="ti">Size(Spacing) / Min(Spacing)</div><div class="col" style="color:#e11">0</div><div class="col">4.031<i></i></div></div>
<div class="lab"><pre style="background:#ff1e1e">0-
 1</pre><pre style="background:#ffff1e">4-
 5</pre></div><mo-scroll dir="h"></mo-scroll>
<div class="bt"><ul class="in"><li class="s">Spacing</li><li>NPTH</li></ul><mo-scroll dir="v"></mo-scroll><div class="res"><label><span>Resolution</span><output>1.0</output><input class="in" type="range" min="0" max="10" value="1"></label></div></div></div></div>
<div class="sash gr"><i class="up"></i></div>
<div class="dr in gr"><svg width="208" height="136" viewBox="1097 711 208 136"><rect x="1098.500" y="712.500" width="206" height="134" fill="none" stroke="#8a4068" stroke-dasharray="5 4"/><rect x="1141.500" y="718.500" width="120" height="120" fill="#9cdada" stroke="#e010e8" stroke-width="3"/></svg></div>
<div class="ft"><div class="up"></div><div class="up"></div><div></div><div class="up"></div><div class="up"></div></div>`);

/* ---------- desktop ---------- */
define('ge-desktop',`
:host{position:relative;display:flex;flex-direction:column;height:100vh;overflow:hidden;background:#000}
.top{display:grid;grid-template-columns:1fr 413px;flex:none}
.mid{display:grid;grid-template-columns:155px 1fr 164px;flex:1;min-height:0}
.mid>*{min-height:0;overflow:hidden}
.s1{display:flex;height:34px;flex:none;background:#ffffcc;border-bottom:2px solid #000;border-top:2px solid #000}
.s1 icon-button{width:31px;height:30px;margin-right:1px}
.s1 .g{background:#54cfae;padding:2px}
.s2{height:32px;flex:none;background:#9cdada;padding:2px}
.s2 div{height:26px;background:#b4ffff;border-color:#e2f8f8 #557f80 #557f80 #e2f8f8}
.rv{left:96px;top:208px;width:510px;height:680px;--glass:linear-gradient(100deg,#e9dfae 0,#8a9a96 5%,#a9b3b3 14%,#777 20%,#1c1f22 32%,#111 55%,#301517 75%,#5a2422 86%,#222 100%);--side:linear-gradient(180deg,transparent 600px,#a8d8e8 600px),linear-gradient(90deg,#8cc5cc 50%,#15181c 50%)}
.pv{left:648px;top:263px;width:320px;height:538px;--glass:linear-gradient(90deg,#8e8888,#a59c9c 25%,#7c5a5a 40%,#565e5e 60%,#6a5a5a 75%,#8a8484);--side:linear-gradient(#8e8e90,#b8bcbc 150px,#191c20 152px,#14171a);--glow:#ddd}
.mp{right:170px;top:90px;width:198px;height:258px;--glass:linear-gradient(90deg,#222,#666 15%,#777 40%,#7a2a2a 60%,#333 80%,#5a2020);--side:#1b1d20;--glow:#bbb}
.ck{position:absolute;right:0;top:341px;width:314px;height:27px;display:flex;align-items:center;gap:4px;padding-left:5px;border-top:1px solid #cde;border-left:1px solid #cde;font:400 12px/16px "Noto Sans","Open Sans",sans-serif;color:#111;background:linear-gradient(90deg,#222,#777 15%,#777 35%,#222 46%,#9ab 49%,#a9bccb 60%,#7f92b8 63%,#b0c2ce 70%,#8090b8 77%,#b0c2ce 84%,#888ac0 94%)}
.ck svg{flex:none}
.hg{right:0;top:367px;width:472px;height:520px;--glass:linear-gradient(90deg,#b8e6ee 0,#8fc070 9%,#777 14%,#444 30%,#9edfe9 36%,#a9e9f2 60%,#b4f0fb);--side:linear-gradient(90deg,#8cc5cc,#b4ecfa);padding:0 7px 0 1px;--glow:#ccc}
`,()=>`<ge-titlebar></ge-titlebar>
<div class="top"><ge-menubar></ge-menubar><ge-brand></ge-brand></div>
<div class="mid"><ge-layers></ge-layers><board-view></board-view><ge-tools></ge-tools></div>
<div class="s1"><icon-button icon="diag" size="21" tone="cream"></icon-button><icon-button icon="angle" size="21" tone="cream"></icon-button><icon-button class="g" icon="quad" size="17" tone="cream"></icon-button></div>
<div class="s2"><div class="up"></div></div>
<div class="ck">${XLOGO}Checklist Editor</div>
<mo-window class="hg" caption="Results histogram"><hist-panel></hist-panel></mo-window>
<mo-window class="mp" caption="Measure Popup"><measure-panel></measure-panel></mo-window>
<mo-window class="rv" caption="Results viewer"><results-panel></results-panel></mo-window>
<mo-window class="pv" hot caption="Popview - 1"><pop-panel></pop-panel></mo-window>`);
</script>
</body>
</html>
